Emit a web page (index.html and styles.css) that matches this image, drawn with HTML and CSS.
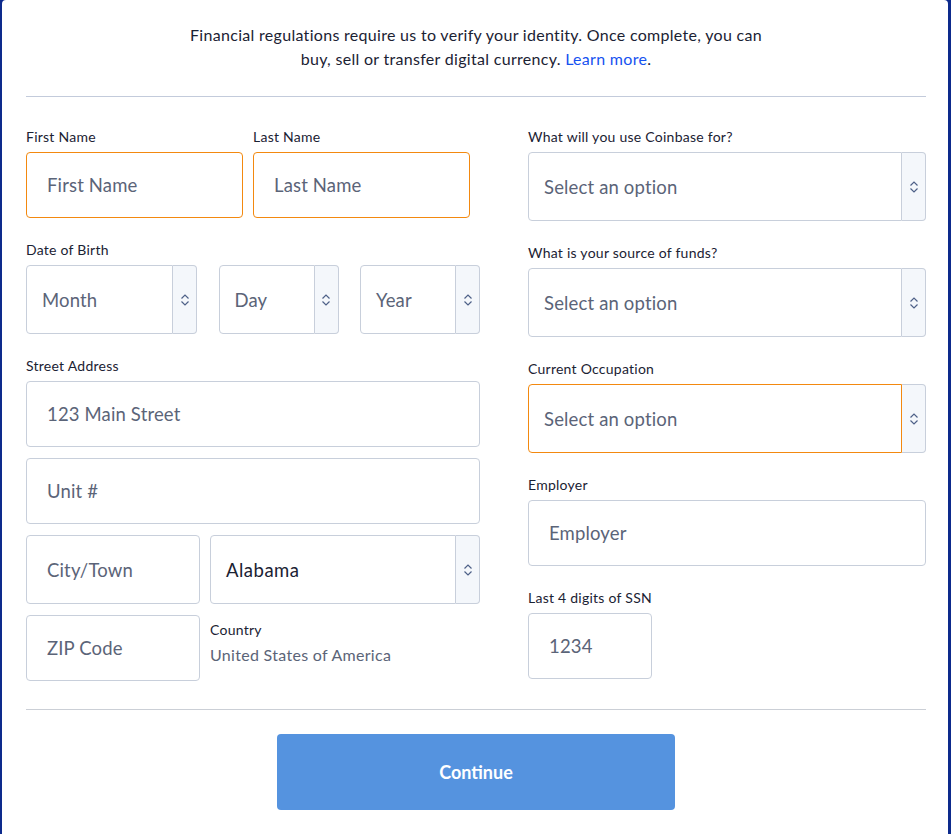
FILE: index.html
```html
<!DOCTYPE html>
<html lang="en">
<head>
<meta charset="utf-8">
<title>Verify your identity</title>
<link rel="stylesheet" href="styles.css">
</head>
<body>
<div class="card">
  <p class="intro">Financial regulations require us to verify your identity. Once complete, you can<br>buy, sell or transfer digital currency. <a href="#" class="link">Learn more</a>.</p>
  <hr class="divider">
  <form class="form">
    <div class="col">
      <div class="row name-row">
        <div class="group">
          <label class="label">First Name</label>
          <input class="input focus" type="text" placeholder="First Name">
        </div>
        <div class="group">
          <label class="label">Last Name</label>
          <input class="input focus" type="text" placeholder="Last Name">
        </div>
      </div>
      <div class="group spaced">
        <label class="label">Date of Birth</label>
        <div class="dob-row">
          <div class="select"><span class="select-field placeholder">Month</span><span class="select-arrow"><svg width="10" height="16" viewBox="0 0 10 16"><path d="M1.5 6.5 L5 3 L8.5 6.5 M1.5 9.5 L5 13 L8.5 9.5" fill="none" stroke="#4e6188" stroke-width="1.2"/></svg></span></div>
          <div class="select"><span class="select-field placeholder">Day</span><span class="select-arrow"><svg width="10" height="16" viewBox="0 0 10 16"><path d="M1.5 6.5 L5 3 L8.5 6.5 M1.5 9.5 L5 13 L8.5 9.5" fill="none" stroke="#4e6188" stroke-width="1.2"/></svg></span></div>
          <div class="select"><span class="select-field placeholder">Year</span><span class="select-arrow"><svg width="10" height="16" viewBox="0 0 10 16"><path d="M1.5 6.5 L5 3 L8.5 6.5 M1.5 9.5 L5 13 L8.5 9.5" fill="none" stroke="#4e6188" stroke-width="1.2"/></svg></span></div>
        </div>
      </div>
      <div class="group spaced">
        <label class="label">Street Address</label>
        <input class="input" type="text" placeholder="123 Main Street">
      </div>
      <input class="input tight" type="text" placeholder="Unit #">
      <div class="city-row tight">
        <input class="input tall" type="text" placeholder="City/Town">
        <div class="select"><span class="select-field value">Alabama</span><span class="select-arrow"><svg width="10" height="16" viewBox="0 0 10 16"><path d="M1.5 6.5 L5 3 L8.5 6.5 M1.5 9.5 L5 13 L8.5 9.5" fill="none" stroke="#4e6188" stroke-width="1.2"/></svg></span></div>
      </div>
      <div class="city-row tight">
        <input class="input" type="text" placeholder="ZIP Code">
        <div class="country">
          <div class="label">Country</div>
          <div class="country-value">United States of America</div>
        </div>
      </div>
    </div>
    <div class="col">
      <div class="group">
        <label class="label">What will you use Coinbase for?</label>
        <div class="select"><span class="select-field placeholder">Select an option</span><span class="select-arrow"><svg width="10" height="16" viewBox="0 0 10 16"><path d="M1.5 6.5 L5 3 L8.5 6.5 M1.5 9.5 L5 13 L8.5 9.5" fill="none" stroke="#4e6188" stroke-width="1.2"/></svg></span></div>
      </div>
      <div class="group spaced">
        <label class="label">What is your source of funds?</label>
        <div class="select"><span class="select-field placeholder">Select an option</span><span class="select-arrow"><svg width="10" height="16" viewBox="0 0 10 16"><path d="M1.5 6.5 L5 3 L8.5 6.5 M1.5 9.5 L5 13 L8.5 9.5" fill="none" stroke="#4e6188" stroke-width="1.2"/></svg></span></div>
      </div>
      <div class="group spaced">
        <label class="label">Current Occupation</label>
        <div class="select"><span class="select-field placeholder focus">Select an option</span><span class="select-arrow"><svg width="10" height="16" viewBox="0 0 10 16"><path d="M1.5 6.5 L5 3 L8.5 6.5 M1.5 9.5 L5 13 L8.5 9.5" fill="none" stroke="#4e6188" stroke-width="1.2"/></svg></span></div>
      </div>
      <div class="group spaced">
        <label class="label">Employer</label>
        <input class="input" type="text" placeholder="Employer">
      </div>
      <div class="group spaced">
        <label class="label">Last 4 digits of SSN</label>
        <input class="input ssn" type="text" placeholder="1234">
      </div>
    </div>
  </form>
  <hr class="divider bottom">
  <div class="actions">
    <button class="button" type="button">Continue</button>
  </div>
</div>
</body>
</html>
```
FILE: styles.css
```css
html, body {
  margin: 0;
  padding: 0;
  background: #0d2a8c;
  height: 834px;
  overflow: hidden;
}
.card {
  margin: 0 3px 0 2px;
  background: #ffffff;
  border-radius: 4px 4px 0 0;
  padding: 23px 22px 24px 24px;
  height: 834px;
  box-sizing: border-box;
  font-family: Lato, "Open Sans", sans-serif;
  color: #1b2233;
}
.intro {
  margin: 0;
  text-align: center;
  font-size: 16px;
  letter-spacing: 0.3px;
  line-height: 24px;
  color: #1b2233;
}
.link {
  color: #1652f0;
  text-decoration: none;
}
.divider {
  border: 0;
  height: 1px;
  background: #c3cbdb;
  margin: 25px 0 0;
}
.divider.bottom {
  background: #cbcfd6;
  margin-top: 28px;
}
.form {
  display: grid;
  grid-template-columns: 454px 398px;
  column-gap: 48px;
  margin-top: 31px;
}
.col {
  display: flex;
  flex-direction: column;
}
.group {
  display: flex;
  flex-direction: column;
}
.spaced {
  margin-top: 23px;
}
.tight {
  margin-top: 11px;
}
.label {
  font-size: 14px;
  letter-spacing: 0.25px;
  line-height: 16px;
  padding-top: 1px;
  margin-bottom: 7px;
  color: #1b2233;
}
.name-row {
  display: grid;
  grid-template-columns: 217px 217px;
  column-gap: 10px;
}
.input {
  box-sizing: border-box;
  height: 66px;
  width: 100%;
  border: 1px solid #c8cfdb;
  border-radius: 4px;
  padding: 0 20px;
  font-family: Lato, "Open Sans", sans-serif;
  font-size: 18.5px;
  letter-spacing: 0.15px;
  color: #1b2233;
  background: #fff;
  outline: none;
}
.input::placeholder {
  color: #5b6478;
  opacity: 1;
}
.input.focus {
  border-color: #f3890f;
}
.input.tall {
  height: 69px;
}
.input.ssn {
  width: 124px;
}
.select {
  display: flex;
  height: 69px;
  box-sizing: border-box;
}
.select-field {
  flex: 1;
  display: flex;
  align-items: center;
  padding: 0 15px;
  border: 1px solid #c8cfdb;
  border-radius: 4px 0 0 4px;
  font-size: 18.5px;
  letter-spacing: 0.15px;
  white-space: nowrap;
  overflow: hidden;
}
.select-field.placeholder {
  color: #5b6478;
}
.select-field.value {
  color: #1b2233;
  letter-spacing: 0.5px;
}
.select-field.focus {
  border-color: #f3890f;
}
.select-arrow {
  width: 23px;
  flex: none;
  display: flex;
  align-items: center;
  justify-content: center;
  background: #f4f7fb;
  border: 1px solid #c8cfdb;
  border-left: 0;
  border-radius: 0 4px 4px 0;
}
.dob-row {
  display: grid;
  grid-template-columns: 171px 120px 120px;
  justify-content: space-between;
}
.city-row {
  display: grid;
  grid-template-columns: 174px 1fr;
  column-gap: 10px;
  align-items: start;
}
.country {
  padding-top: 6px;
}
.country .label {
  margin-bottom: 5px;
}
.country-value {
  font-size: 16px;
  letter-spacing: 0.3px;
  line-height: 24px;
  color: #5b6478;
}
.actions {
  display: flex;
  justify-content: center;
  margin-top: 24px;
}
.button {
  width: 398px;
  height: 76px;
  border: 0;
  border-radius: 4px;
  background: #5593df;
  color: #ffffff;
  font-family: Lato, "Open Sans", sans-serif;
  font-weight: 700;
  font-size: 18px;
}
```
